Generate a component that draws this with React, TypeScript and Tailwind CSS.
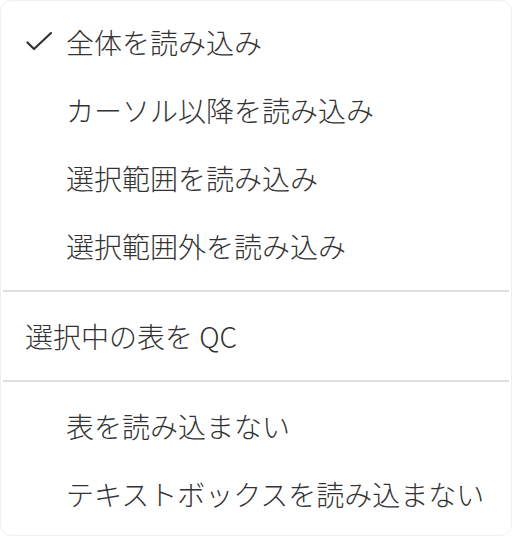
const CheckIcon = () => (
  <svg width="28" height="28" viewBox="0 0 28 28" fill="none" className="shrink-0">
    <path d="M2.5 14.5 L9 21 L26 5" stroke="#333" strokeWidth="2.2" strokeLinecap="round" strokeLinejoin="round" />
  </svg>
);

type Item = { label: string; checked?: boolean; indent?: boolean };

const MenuItem = ({ label, checked, indent = true }: Item) => (
  <div className="flex items-center h-[68px] pl-[24px]">
    {indent && <div className="w-[41px] flex items-center">{checked && <CheckIcon />}</div>}
    <span className="text-[28px] leading-none font-light text-[#333] whitespace-nowrap">{label}</span>
  </div>
);

const Separator = () => <div className="h-[2px] bg-[#e0e0e0] mx-[2px] my-[10px]" />;

export default function App() {
  return (
    <div className="w-[512px] h-[536px] bg-white">
      <div
        className="w-full h-full bg-white rounded-[12px] border border-[#efefef] py-[7px] overflow-hidden"
        style={{ fontFamily: '"Noto Sans CJK JP", "Noto Sans", sans-serif' }}
      >
        <MenuItem label="全体を読み込み" checked />
        <MenuItem label="カーソル以降を読み込み" />
        <MenuItem label="選択範囲を読み込み" />
        <MenuItem label="選択範囲外を読み込み" />
        <Separator />
        <MenuItem label="選択中の表を QC" indent={false} />
        <Separator />
        <MenuItem label="表を読み込まない" />
        <MenuItem label="テキストボックスを読み込まない" />
      </div>
    </div>
  );
}
